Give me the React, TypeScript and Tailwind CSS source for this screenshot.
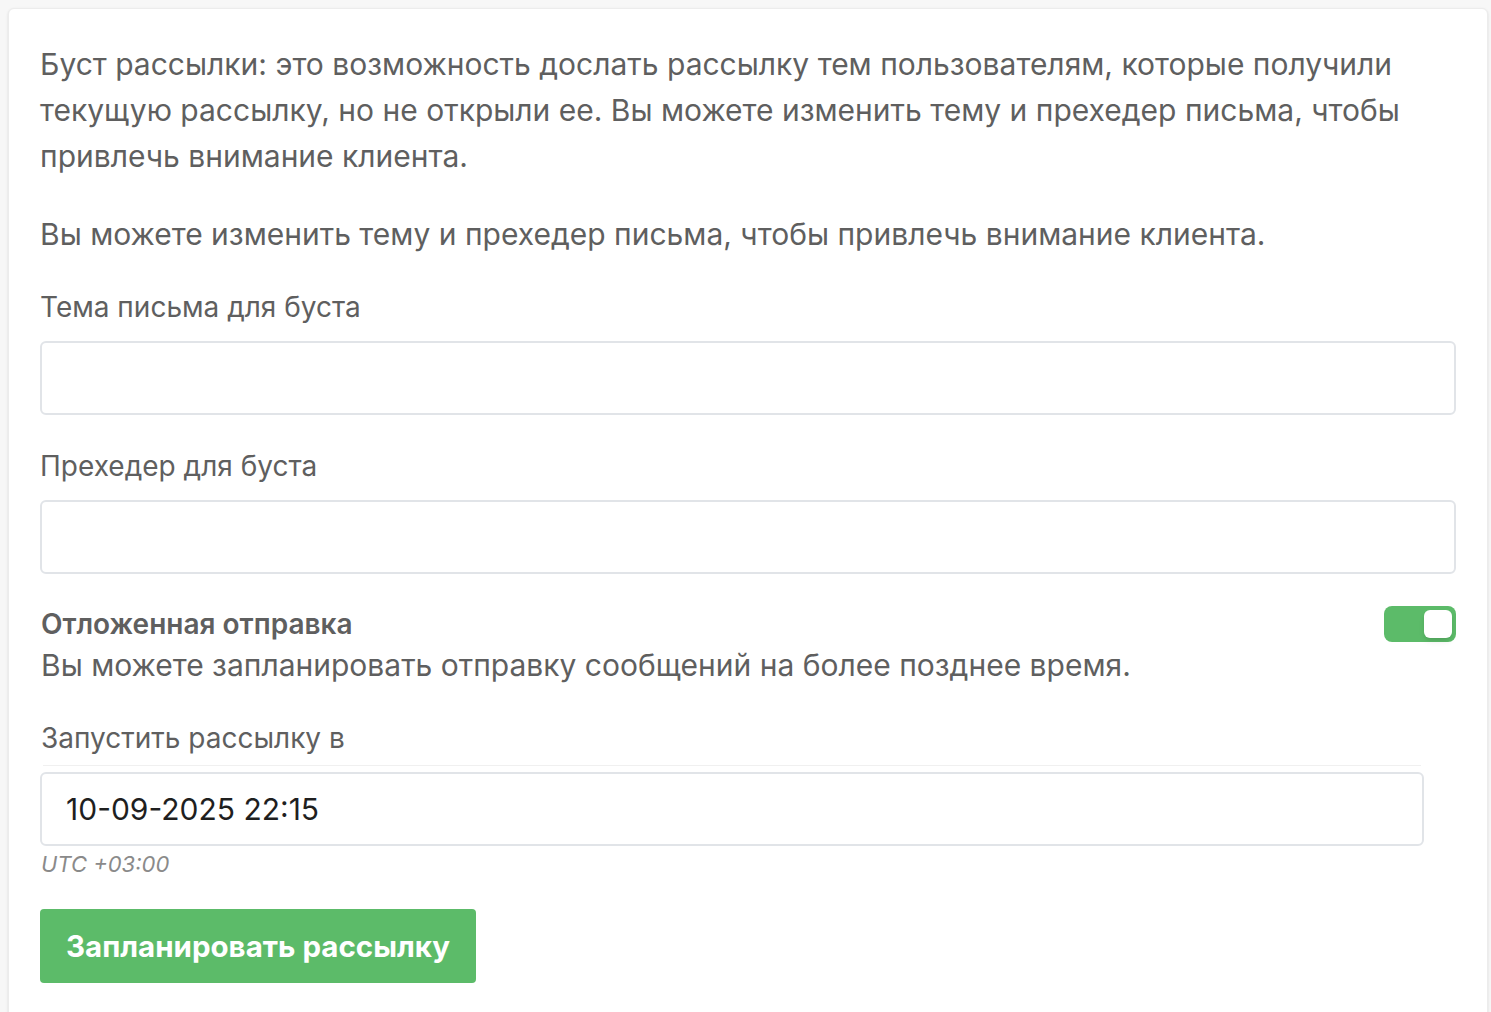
import React from "react"

const font = { fontFamily: "Inter, 'Noto Sans', sans-serif" }

const Field = ({ label }: { label: string }) => (
  <div className="flex flex-col">
    <label className="text-[28px] leading-[46px] text-[#5f5f5f]">{label}</label>
    <input
      type="text"
      className="mt-[11px] h-[74px] w-full rounded-md border-2 border-[#e1e4e8] bg-white px-6 text-[28px] outline-none"
    />
  </div>
)

const App = () => {
  return (
    <div style={font} className="min-h-screen bg-[#f7f7f7] pl-2 pr-[3px] pt-2">
      <div className="min-h-[1010px] rounded-md border border-[#ececec] bg-white pl-[31px] pr-[31px] pt-8 shadow-sm">
        <p className="text-[30px] leading-[46px] text-[#5f5f5f]">
          Буст рассылки: это возможность дослать рассылку тем пользователям, которые получили
          текущую рассылку, но не открыли ее. Вы можете изменить тему и прехедер письма, чтобы
          привлечь внимание клиента.
        </p>
        <p className="mt-8 text-[30px] leading-[46px] text-[#5f5f5f]">
          Вы можете изменить тему и прехедер письма, чтобы привлечь внимание клиента.
        </p>

        <div className="mt-[27px] flex flex-col gap-[28px]">
          <Field label="Тема письма для буста" />
          <Field label="Прехедер для буста" />
        </div>

        <div className="mt-[30px] flex h-[40px] items-center justify-between">
          <span className="pl-px text-[28px] font-semibold text-[#5f5f5f]">Отложенная отправка</span>
          <button className="flex h-[36px] w-[72px] items-center justify-end rounded-lg bg-[#5cbb69] p-1">
            <span className="h-[28px] w-[28px] rounded-md bg-white shadow-md" />
          </button>
        </div>
        <p className="pl-px text-[30px] leading-[42px] text-[#5f5f5f]">
          Вы можете запланировать отправку сообщений на более позднее время.
        </p>

        <div className="mt-[29px] w-[1384px]">
          <label className="block pl-px text-[28px] leading-[46px] text-[#5f5f5f]">Запустить рассылку в</label>
          <div className="mx-[3px] mt-[4px] border-t border-[#f0f0f0] pt-[6px]" />
          <div className="flex h-[74px] items-center rounded-md border-2 border-[#e1e4e8] px-6 text-[30px] text-[#1f1f1f]">
            10-09-2025 22:15
          </div>
          <p className="mt-[5px] pl-px text-[22px] italic leading-[26px] text-[#8a8a8a]">UTC +03:00</p>
        </div>

        <button className="mt-[32px] h-[74px] rounded bg-[#5cbb69] px-[26px] text-[29.5px] font-bold text-white">
          Запланировать рассылку
        </button>
      </div>
    </div>
  )
}

export default App
